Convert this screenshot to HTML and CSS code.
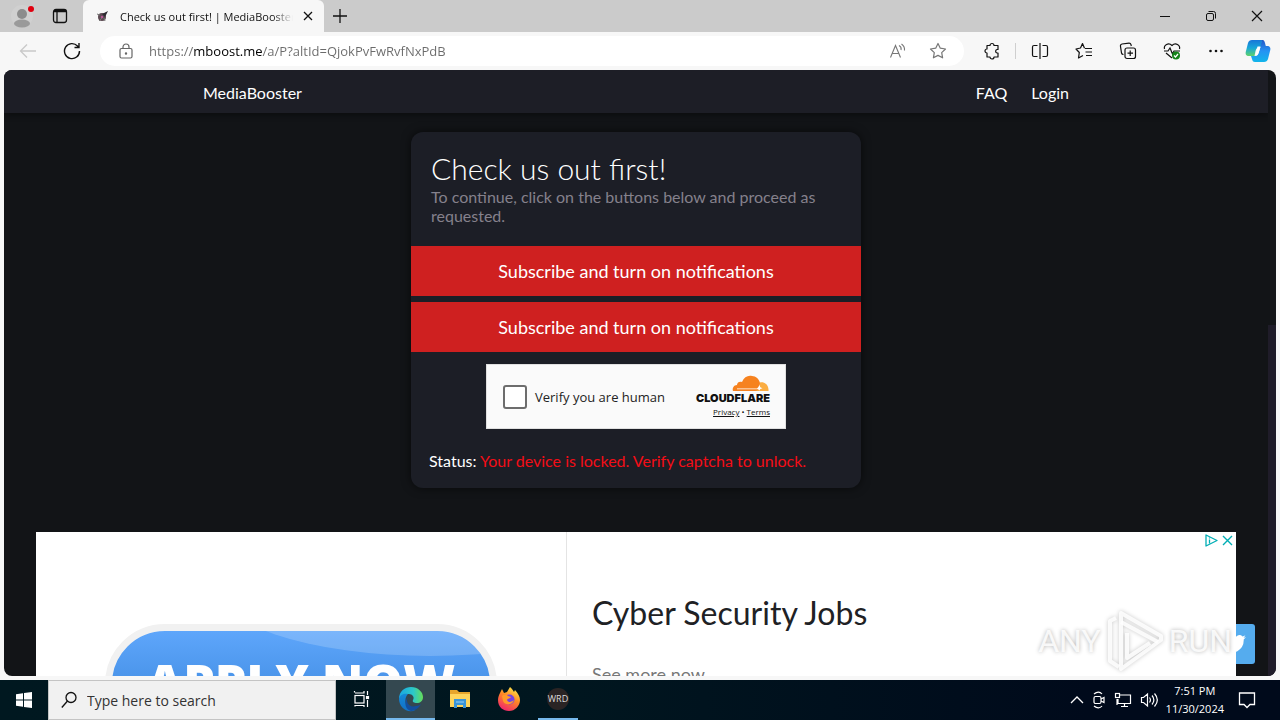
FILE: index.html
```html
<!DOCTYPE html>
<html lang="en">
<head>
    <meta charset="UTF-8">
    <meta name="viewport" content="width=device-width, initial-scale=1.0">
    <title>Check us out first! | MediaBooster</title>
    <link rel="stylesheet" href="styles.css">
</head>
<body>
    <!-- Tab strip -->
    <div class="tabs">
        <button class="profile" aria-label="Profile">
            <svg width="24" height="26" viewBox="0 0 24 26">
                <circle cx="12" cy="13" r="11" fill="#d0d0d0"/>
                <circle cx="12" cy="11" r="5" fill="#8c8c8c"/>
                <ellipse cx="12" cy="20.500" rx="8" ry="4" fill="#9a9a9a"/>
                <circle cx="21" cy="6" r="3" fill="#e0000f"/>
            </svg>
        </button>
        <button class="tab-menu" aria-label="Tab actions">
            <svg width="16" height="16" viewBox="0 0 16 16" fill="none" stroke="#111" stroke-width="1.300">
                <rect x="1.500" y="1.500" width="13" height="13" rx="2.500"/>
                <path d="M2 3h12" stroke-width="2.500"/>
                <path d="M5 4v10"/>
            </svg>
        </button>
        <div class="tab">
            <svg width="14" height="14" viewBox="0 0 14 14">
                <circle cx="6" cy="8" r="4" fill="#5c4a52"/>
                <path d="M6 5L12 2 9 8z" fill="#2d2a31"/>
                <path d="M1 5l3 1M3 12l3-3M9 12l-1-3" stroke="#777" fill="none"/>
                <circle cx="6" cy="8" r="1.200" fill="#b59"/>
            </svg>
            <span class="tab-title">Check us out first! | MediaBooster</span>
            <button aria-label="Close tab">
                <svg width="10" height="10" viewBox="0 0 10 10" stroke="#111" stroke-width="1.300"><path d="M1 1l8 8M9 1L1 9"/></svg>
            </button>
        </div>
        <button class="new-tab" aria-label="New tab">
            <svg width="14" height="14" viewBox="0 0 14 14" stroke="#111" stroke-width="1.300"><path d="M7 0v14M0 7h14"/></svg>
        </button>
        <div class="window-buttons">
            <button aria-label="Minimize">
                <svg width="12" height="12" viewBox="0 0 12 12" stroke="#111"><path d="M1 6.500h10"/></svg>
            </button>
            <button aria-label="Restore">
                <svg width="12" height="12" viewBox="0 0 12 12" fill="none" stroke="#111"><rect x="1.500" y="3.500" width="7" height="7" rx="1.500"/><path d="M3.500 1.500h5a2 2 0 0 1 2 2v5"/></svg>
            </button>
            <button aria-label="Close">
                <svg width="12" height="12" viewBox="0 0 12 12" stroke="#111" stroke-width="1.200"><path d="M1 1l10 10M11 1L1 11"/></svg>
            </button>
        </div>
    </div>

    <!-- Address bar -->
    <div class="toolbar">
        <button class="back" aria-label="Back">
            <svg width="18" height="16" viewBox="0 0 18 16" fill="none" stroke="#c9c9c9" stroke-width="1.300"><path d="M17 8H2M8 1.500L1.500 8 8 14.500"/></svg>
        </button>
        <button class="reload" aria-label="Refresh">
            <svg width="18" height="18" viewBox="0 0 18 18" fill="none" stroke="#111" stroke-width="1.400"><path d="M16.500 9A7.500 7.500 0 1 1 14.500 4L16 5.500M16 1v4.500h-4.500"/></svg>
        </button>
        <div class="address">
            <svg width="14" height="16" viewBox="0 0 14 16" fill="none" stroke="#666" stroke-width="1.200"><rect x="1" y="5.500" width="12" height="9.500" rx="1.500"/><path d="M4 5.500V4a3 3 0 0 1 6 0v1.500"/><circle cx="7" cy="10.500" r=".6" fill="#666"/></svg>
            <input class="url" type="text" aria-label="Address" value="https://mboost.me/a/P?altId=QjokPvFwRvfNxPdB">
            <button aria-label="Read aloud">
                <svg width="18" height="16" viewBox="0 0 18 16" fill="none" stroke="#777" stroke-width="1.100"><path d="M1.500 14.500L6.500 2.500l5 12M3 10.500h7M10 2.500a4 4 0 0 1 2 4.500M12.500 1a7 7 0 0 1 3 6.500"/></svg>
            </button>
            <button aria-label="Add to favorites">
                <svg width="18" height="18" viewBox="0 0 18 18" fill="none" stroke="#777" stroke-width="1.200" stroke-linejoin="round"><path d="M9 1.500l2.300 4.700 5.200.8-3.800 3.600.9 5.200L9 13.400l-4.600 2.400.9-5.200L1.500 7l5.200-.8z"/></svg>
            </button>
        </div>
        <div class="tools">
            <button aria-label="Extensions">
                <svg width="18" height="18" viewBox="0 0 18 18" fill="none" stroke="#111" stroke-width="1.200" stroke-linejoin="round"><path d="M4 3.500h3a2 2 0 0 1 4 0h4v4h-1a1.800 1.800 0 0 0 0 3.500h1v4h-4a2 2 0 0 1-4 0H4v-4a2 2 0 0 1 0-4z"/></svg>
            </button>
            <span class="line"></span>
            <button aria-label="Split screen">
                <svg width="18" height="18" viewBox="0 0 18 18" fill="none" stroke="#111" stroke-width="1.200"><path d="M9 1v16M6.500 3.500H3A1.500 1.500 0 0 0 1.500 5v8A1.500 1.500 0 0 0 3 14.500h3.500M11.500 3.500H15A1.500 1.500 0 0 1 16.500 5v8a1.500 1.500 0 0 1-1.500 1.500h-3.500"/></svg>
            </button>
            <button aria-label="Favorites">
                <svg width="18" height="18" viewBox="0 0 18 18" fill="none" stroke="#111" stroke-width="1.200" stroke-linejoin="round"><path d="M9.500 6.200L7.500 1.500 5.500 6 1 7l3.300 3.500-.8 5.500 4.500-2.500M10 6.500h7M10.500 10h6.500M11 13.500h6"/></svg>
            </button>
            <button aria-label="Collections">
                <svg width="18" height="18" viewBox="0 0 18 18" fill="none" stroke="#111" stroke-width="1.200"><rect x="6" y="6" width="10.500" height="10.500" rx="2"/><path d="M11.200 8.500v5.500M8.500 11.200H14M4.500 12.500a2 2 0 0 1-2-1.500L1.500 4.500a2 2 0 0 1 1.500-2.500L10 1.200a2 2 0 0 1 2 1.500l.3 1.300"/></svg>
            </button>
            <button aria-label="Browser essentials">
                <svg width="18" height="18" viewBox="0 0 18 18" fill="none" stroke="#111" stroke-width="1.200"><path d="M1.500 7C.5 3 5.500 0 9 3.500 12.500 0 17.500 3 16.500 7M1 9h4l2-3 2.500 6 1.500-3h6M3 11l6 5"/><circle cx="13" cy="13.500" r="4" fill="#16831b" stroke="none"/><path d="M11 13.500l1.500 1.500 2.500-3" stroke="#fff"/></svg>
            </button>
            <button aria-label="Settings and more">
                <svg width="18" height="18" viewBox="0 0 18 18" fill="#111"><circle cx="3.500" cy="9" r="1.300"/><circle cx="9" cy="9" r="1.300"/><circle cx="14.500" cy="9" r="1.300"/></svg>
            </button>
        </div>
        <button class="copilot" aria-label="Copilot">
            <svg width="26" height="24" viewBox="0 0 26 24">
                <defs>
                    <linearGradient id="cpA" x1="0" y1="0" x2="0" y2="1"><stop offset="0" stop-color="#1976d8"/><stop offset=".5" stop-color="#18a7d8"/><stop offset="1" stop-color="#5fd36b"/></linearGradient>
                    <linearGradient id="cpB" x1="0" y1="0" x2="0" y2="1"><stop offset="0" stop-color="#2454c6"/><stop offset=".5" stop-color="#2593f3"/><stop offset="1" stop-color="#12b5ea"/></linearGradient>
                </defs>
                <path d="M7 1h10c2 0 2 2 1.500 4l-1 3h-3c-2 0-3 1-4 4l-1 5H4c-3 0-4-2-3-5l2-8c.6-2 2-3 4-3z" fill="url(#cpA)"/>
                <path d="M17 1c2 0 2.500 1 3 3l.8 3H22c3 0 4 2 3 5l-2 8c-.6 2-2 3-4 3H10c-2 0-2.500-1-3-3l-1-3h4c2 0 3-1 4-4l1.500-5 .5-3c.2-1 .5-1 1-1z" fill="url(#cpB)"/>
                <path d="M12.500 7.500h3l-2 6.500c-.8 2-1.500 2.500-3 2.500z" fill="#fff"/>
            </svg>
        </button>
    </div>

    <!-- Web page -->
    <div class="page">
        <div class="content">
            <header class="site-header">
                <nav class="site-nav">
                    <a class="brand" href="#">MediaBooster</a>
                    <a href="#">FAQ</a>
                    <a href="#">Login</a>
                </nav>
            </header>
            <main class="card">
                <div class="intro">
                    <h1>Check us out first!</h1>
                    <p>To continue, click on the buttons below and proceed as requested.</p>
                </div>
                <div class="actions">
                    <button>Subscribe and turn on notifications</button>
                    <button>Subscribe and turn on notifications</button>
                </div>
                <div class="captcha">
                    <input type="checkbox" id="human">
                    <label for="human">Verify you are human</label>
                    <div class="cloudflare">
                        <svg width="38" height="17" viewBox="0 0 38 17">
                            <path d="M1 16c-1-3 1-6 4-6 0-3 3-4 5-3C12 2 16 0 20 1c4 0 7 3 8 7l-1 8z" fill="#f6821f"/>
                            <path d="M28 7.500c5-1 9 3 8.500 8.500H22c3-.4 5-1 6-3z" fill="#fbad41"/>
                            <path d="M5 13.500h20l1.200-1.200 1.300-2.300.8 2.300 2.200.9-2.200.8-.8 1.500-1.500-1.300H5z" fill="#fff"/>
                        </svg>
                        <strong>CLOUDFLARE</strong>
                        <div class="terms"><a href="#">Privacy</a> <span>•</span> <a href="#">Terms</a></div>
                    </div>
                </div>
                <p class="status">Status: <span>Your device is locked. Verify captcha to unlock.</span></p>
            </main>
            <div class="ad">
                <div class="ad-picture">
                    <a class="apply" href="#">APPLY NOW</a>
                </div>
                <div class="ad-text">
                    <h2>Cyber Security Jobs</h2>
                    <a href="#">See more now</a>
                </div>
                <div class="ad-choices">
                    <button aria-label="AdChoices">
                        <svg width="13" height="13" viewBox="0 0 13 13" fill="none" stroke="#00aeb5" stroke-width="1.300" stroke-linejoin="round"><path d="M1 1l11 5.500L1 12z"/><path d="M4.500 5.500v4M4.500 3.500v1"/></svg>
                    </button>
                    <button aria-label="Close ad">
                        <svg width="11" height="11" viewBox="0 0 11 11" stroke="#00aeb5" stroke-width="1.400"><path d="M1 1l9 9M10 1l-9 9"/></svg>
                    </button>
                </div>
            </div>
            <a class="twitter" href="#" aria-label="Twitter">
                <svg width="22" height="20" viewBox="0 0 24 20" fill="#fff"><path d="M24 2.400a9 9 0 0 1-2.700.7A5 5 0 0 0 23.300.5a10 10 0 0 1-3.100 1.200A5 5 0 0 0 11.800 6 14 14 0 0 1 1.700.9a5 5 0 0 0 1.500 6.600A5 5 0 0 1 1 6.900a5 5 0 0 0 4 4.900 5 5 0 0 1-2.200.1 5 5 0 0 0 4.600 3.400A10 10 0 0 1 0 17.500 14 14 0 0 0 21.500 5 10 10 0 0 0 24 2.400z"/></svg>
            </a>
        </div>
        <div class="scrollbar"><div class="thumb"></div></div>
    </div>

    <!-- Recorder watermark -->
    <div class="watermark">
        <span>ANY</span>
        <svg width="58" height="64" viewBox="0 0 58 64" fill="none" stroke="#fff" stroke-opacity=".85" stroke-width="4" stroke-linejoin="round">
            <path d="M15 4l40 23v4L15 60z"/>
            <path d="M15 13l37 20M21 24v25l23-15M10 9L4 12v40l9 6"/>
        </svg>
        <span>RUN</span>
    </div>

    <!-- Taskbar -->
    <div class="taskbar">
        <button class="start" aria-label="Start">
            <svg width="16" height="16" viewBox="0 0 16 16" fill="#fff"><path d="M0 2.200L7 1.200V7.500H0zM8 1.100L16 0v7.500H8zM0 8.500h7v6.300L0 13.800zM8 8.500h8V16l-8-1.100z"/></svg>
        </button>
        <label class="search">
            <svg width="16" height="18" viewBox="0 0 16 18" fill="none" stroke="#111" stroke-width="1.300"><circle cx="10" cy="6.500" r="5"/><path d="M6.500 10L.8 16.500"/></svg>
            <input type="text" aria-label="Search" placeholder="Type here to search">
        </label>
        <div class="tasks">
            <button class="task" aria-label="Task View">
                <svg width="18" height="18" viewBox="0 0 18 18" fill="none" stroke="#fff" stroke-width="1.200"><rect x="2" y="5.500" width="9" height="7.500"/><path d="M1.500 2.500V1M2 3h9V1M2 16.500v-1h9V17M14.500 1v4M14.500 10v7"/><rect x="13.500" y="6.500" width="2" height="2" fill="#fff"/></svg>
            </button>
            <button class="task active" aria-label="Microsoft Edge">
                <svg width="26" height="26" viewBox="0 0 26 26">
                    <defs>
                        <linearGradient id="edgeA" x1="0" y1="0" x2="1" y2="0"><stop offset="0" stop-color="#18a6e4"/><stop offset=".6" stop-color="#2cc8c8"/><stop offset="1" stop-color="#66dd58"/></linearGradient>
                        <linearGradient id="edgeB" x1="0" y1="0" x2="0" y2="1"><stop offset="0" stop-color="#1488d8"/><stop offset="1" stop-color="#1271c5"/></linearGradient>
                    </defs>
                    <path d="M1 13C1 5 7 1 13 1c7 0 12 5 12 10 0 4-3 6-6 6-3 0-5-1-4-3 2-3-1-6-4-6-5 0-8 2-10 5z" fill="url(#edgeA)"/>
                    <path d="M1 13c1-5 6-6 9-5-3 3-4 9 0 13 2 2 5 4 8 3-9 4-17-3-17-11z" fill="url(#edgeB)"/>
                    <path d="M10 11c-3 5 1 11 8 9 2 0 4-1 5-2-2 4-6 7-10 7-5-1-8-8-3-14z" fill="#134e9d"/>
                </svg>
            </button>
            <button class="task" aria-label="File Explorer">
                <svg width="22" height="20" viewBox="0 0 22 20">
                    <path d="M1 1h7l2 2h11v15H1z" fill="#e7a52c"/>
                    <path d="M1 5h20v13H1z" fill="#ffd45c"/>
                    <path d="M5 10h12v9h-3v-3H8v3H5z" fill="#3a94d8"/>
                    <path d="M7 13h8" stroke="#9bd0f5"/>
                </svg>
            </button>
            <button class="task" aria-label="Firefox">
                <svg width="24" height="24" viewBox="0 0 24 24">
                    <defs>
                        <linearGradient id="fox" x1=".8" y1="0" x2=".3" y2="1"><stop offset="0" stop-color="#fff14f"/><stop offset=".45" stop-color="#ff8a24"/><stop offset="1" stop-color="#f0246d"/></linearGradient>
                    </defs>
                    <path d="M3 6l2-4 2 4 3-1 3-5c2 2 3 3 4 5l1-2c3 3 5 7 5 10 0 6-5 11-11 11S1 20 1 13c0-3 1-5 2-7z" fill="url(#fox)"/>
                    <circle cx="12.500" cy="12.500" r="5" fill="#7543e3"/>
                    <path d="M5 9c3-2 5-1 6 0l3 1c-1 2-3 1-4 3 1 3 5 2 7 0-1 5-9 6-11 1z" fill="#ff9a2a"/>
                </svg>
            </button>
            <button class="task running" aria-label="WRD">
                <span class="wrd">WRD</span>
            </button>
        </div>
        <div class="tray">
            <svg width="14" height="10" viewBox="0 0 14 10" fill="none" stroke="#fff" stroke-width="1.300"><path d="M1 8l6-6 6 6"/></svg>
            <svg width="14" height="18" viewBox="0 0 14 18" fill="none" stroke="#fff" stroke-width="1.200"><rect x="2" y="5.500" width="7" height="7" rx="1.500"/><path d="M9 8l3-1.500v5L9 10M2 3c3-2.500 6-2.500 8 0M2 15c3 2.500 6 2.500 8 0"/></svg>
            <svg width="18" height="16" viewBox="0 0 18 16" fill="none" stroke="#fff" stroke-width="1.200"><path d="M6 3h10.500v8.500H4V7M7 14.500h7M10.500 11.500v3M3 7v6"/><rect x="1.500" y="1.500" width="4" height="4"/></svg>
            <svg width="18" height="16" viewBox="0 0 18 16" fill="none" stroke="#fff" stroke-width="1.200"><path d="M1.500 5.500h2L7.500 2v12L3.500 10.500h-2zM9.500 5.500c1.500 2 1.500 3 0 5M12 3.500c2.500 3 2.500 6 0 9M14.500 1.500c3.500 4 3.500 9 0 13"/></svg>
            <div class="clock">
                <div>7:51 PM</div>
                <div>11/30/2024</div>
            </div>
            <svg width="18" height="18" viewBox="0 0 18 18" fill="none" stroke="#fff" stroke-width="1.300"><path d="M1.500 2h15v11.500H12l-3 3-3-3H1.500z"/></svg>
        </div>
    </div>
</body>
</html>
```
FILE: styles.css
```css
* {
    box-sizing: border-box;
    margin: 0;
    padding: 0;
}
body {
    display: flex;
    flex-direction: column;
    height: 100vh;
    overflow: hidden;
    background: #f7f7f7;
    font-family: "Open Sans", "Noto Sans", sans-serif;
    font-size: 11px;
    color: #111;
}
button {
    display: flex;
    align-items: center;
    justify-content: center;
    border: none;
    background: none;
    font: inherit;
    color: inherit;
    cursor: pointer;
}
input {
    border: none;
    outline: none;
    background: none;
    font: inherit;
}
a {
    color: inherit;
    text-decoration: none;
}
svg {
    display: block;
    flex-shrink: 0;
}

/* tab strip */
.tabs {
    display: flex;
    height: 32px;
    flex-shrink: 0;
    background: #cbcbcb;
}
.profile {
    width: 44px;
}
.tab-menu {
    width: 32px;
    margin-right: 7px;
}
.tab {
    display: flex;
    align-items: center;
    width: 241px;
    padding: 0 11px 0 13px;
    gap: 10px;
    background: #f7f7f7;
    border-radius: 6px 6px 0 0;
}
.tab-title {
    flex: 1;
    overflow: hidden;
    white-space: nowrap;
    -webkit-mask-image: linear-gradient(90deg, #000 88%, transparent);
    mask-image: linear-gradient(90deg, #000 88%, transparent);
}
.new-tab {
    width: 32px;
}
.window-buttons {
    display: flex;
    margin-left: auto;
}
.window-buttons button {
    width: 46px;
}

/* address bar */
.toolbar {
    display: flex;
    align-items: center;
    height: 38px;
    flex-shrink: 0;
    padding: 0 9px 0 19px;
}
.reload {
    margin: 0 19px 0 26px;
}
.address {
    display: flex;
    align-items: center;
    flex: 1;
    height: 30px;
    padding: 0 17px 0 19px;
    background: #fff;
    border-radius: 15px;
}
.address button {
    margin-left: 22px;
}
.url {
    flex: 1;
    min-width: 0;
    margin-left: 16px;
    font-size: 13px;
    /* only the host is black */
    background: linear-gradient(90deg, #6b6b6b 44px, #000 44px, #000 113px, #6b6b6b 113px);
    -webkit-background-clip: text;
    background-clip: text;
    -webkit-text-fill-color: transparent;
}
.tools {
    display: flex;
    align-items: center;
    gap: 26px;
    margin: 0 20px 0 19px;
}
.line {
    width: 1px;
    height: 16px;
    margin: 0 -11px 0 -12px;
    background: #cfcfcf;
}

/* web page */
.page {
    display: flex;
    flex: 1;
    min-height: 0;
    margin: 0 4px 4px;
    overflow: hidden;
    border-radius: 8px;
    background: #121417;
    font-family: Lato, sans-serif;
    color: #fff;
}
.content {
    position: relative;
    display: flex;
    flex-direction: column;
    align-items: center;
    flex: 1;
    overflow: hidden;
}
.scrollbar {
    display: flex;
    flex-direction: column;
    justify-content: flex-end;
    width: 8px;
}
.thumb {
    height: 58%;
    background: #1f1c29;
}
.site-header {
    display: flex;
    justify-content: center;
    align-self: stretch;
    flex-shrink: 0;
    background: #1d1e26;
    box-shadow: 0 2px 6px rgba(0, 0, 0, 0.4);
}
.site-nav {
    display: flex;
    align-items: center;
    width: 866px;
    height: 43px;
    padding-top: 1px;
    gap: 24px;
    font-size: 16px;
}
.brand {
    margin-right: auto;
}
.card {
    flex-shrink: 0;
    width: 450px;
    margin-top: 19px;
    padding-bottom: 17px;
    background: #1c1e26;
    border-radius: 12px;
    box-shadow: 0 0 10px rgba(0, 0, 0, 0.6);
}
.intro {
    padding: 18px 20px 21px;
}
.intro h1 {
    font-size: 30px;
    font-weight: 300;
    line-height: 37px;
}
.intro p {
    font-size: 16px;
    line-height: 19px;
    color: #85818c;
}
.actions {
    display: flex;
    flex-direction: column;
    gap: 6px;
}
.actions button {
    height: 50px;
    background: #cf2020;
    font-size: 18px;
}
.captcha {
    display: flex;
    align-items: center;
    width: 300px;
    height: 65px;
    margin: 12px auto 0;
    padding: 0 15px 0 16px;
    border: 1px solid #e0e0e0;
    background: #fafafa;
    color: #232323;
    font-family: "Open Sans", "Noto Sans", sans-serif;
}
.captcha input {
    appearance: none;
    width: 24px;
    height: 24px;
    margin-right: 8px;
    border: 2px solid #6d6d6d;
    border-radius: 3px;
    background: #fff;
}
.captcha label {
    flex: 1;
    font-size: 13px;
    white-space: nowrap;
}
.cloudflare {
    display: flex;
    flex-direction: column;
    align-items: flex-end;
    color: #111;
}
.cloudflare strong {
    font-family: Inter, sans-serif;
    font-size: 11px;
    font-weight: 900;
    line-height: 13px;
}
.terms {
    font-size: 8px;
    line-height: 13px;
}
.terms a {
    text-decoration: underline;
}
.status {
    margin: 22px 18px 0;
    font-size: 16px;
    line-height: 20px;
}
.status span {
    color: #f40d16;
}

/* ad banner */
.ad {
    position: relative;
    z-index: 1;
    display: flex;
    flex: 1;
    width: 1200px;
    margin-top: 44px;
    overflow: hidden;
    background: #fff;
}
.ad-picture {
    display: flex;
    align-items: flex-start;
    justify-content: center;
    width: 531px;
    padding-top: 92px;
    border-right: 1px solid #e4e4e4;
}
.apply {
    position: relative;
    flex-shrink: 0;
    width: 392px;
    height: 140px;
    overflow: hidden;
    border: 7px solid #f1f1f1;
    border-radius: 60px;
    background: linear-gradient(#5ea6fb, #3a86dc 70%);
    font-family: "Open Sans", sans-serif;
    font-size: 50px;
    font-weight: 800;
    line-height: 102px;
    text-align: center;
}
/* glossy highlight */
.apply::before {
    content: "";
    position: absolute;
    top: -124px;
    right: -160px;
    width: 440px;
    height: 149px;
    border-radius: 50%;
    background: rgba(255, 255, 255, 0.18);
}
.ad-text {
    padding: 60px 25px 0;
    color: #202124;
}
.ad-text h2 {
    margin-bottom: 28px;
    font-size: 32px;
    font-weight: 400;
    line-height: 42px;
}
.ad-text a {
    font-size: 18px;
    line-height: 24px;
    color: #777;
}
.ad-choices {
    position: absolute;
    top: 2px;
    right: 3px;
    display: flex;
    gap: 4px;
}
.twitter {
    position: absolute;
    right: 13px;
    bottom: 12px;
    display: flex;
    align-items: center;
    justify-content: center;
    width: 40px;
    height: 40px;
    border-radius: 3px;
    background: #55acee;
}

/* watermark over everything */
.watermark {
    position: absolute;
    right: 48px;
    bottom: 47px;
    z-index: 2;
    display: flex;
    align-items: center;
    gap: 5px;
    font-family: Roboto, sans-serif;
    font-size: 32px;
    color: rgba(255, 255, 255, 0.85);
    text-shadow: 0 0 4px rgba(0, 0, 0, 0.3);
    pointer-events: none;
}
.watermark svg {
    filter: drop-shadow(0 0 2px rgba(0, 0, 0, 0.25));
}

/* taskbar */
.taskbar {
    display: flex;
    height: 40px;
    flex-shrink: 0;
    background: linear-gradient(90deg, #001820, #00161f 45%, #000a1b 85%);
    color: #fff;
}
.start {
    width: 48px;
}
.search {
    display: flex;
    align-items: center;
    width: 288px;
    padding: 0 12px;
    gap: 10px;
    border: 1px solid #c4c4c4;
    background: #f1f1f1;
}
.search input {
    flex: 1;
    font-size: 14px;
}
.search input::placeholder {
    color: #333;
}
.tasks {
    display: flex;
    margin-left: 1px;
}
.task {
    width: 49px;
    border-bottom: 2px solid transparent;
}
.task.active {
    background: #344850;
    border-bottom-color: #76b9ed;
}
.task.running {
    width: 40px;
    margin-left: 5px;
    border-bottom-color: #76b9ed;
}
.wrd {
    width: 22px;
    height: 22px;
    border-radius: 50%;
    background: #2a2424;
    font-size: 9px;
    line-height: 22px;
    text-align: center;
    color: #ddd;
}
.tray {
    display: flex;
    align-items: center;
    margin-left: auto;
    padding-right: 24px;
    gap: 8px;
}
.clock {
    text-align: center;
    line-height: 18px;
    margin-right: 6px;
}
```
